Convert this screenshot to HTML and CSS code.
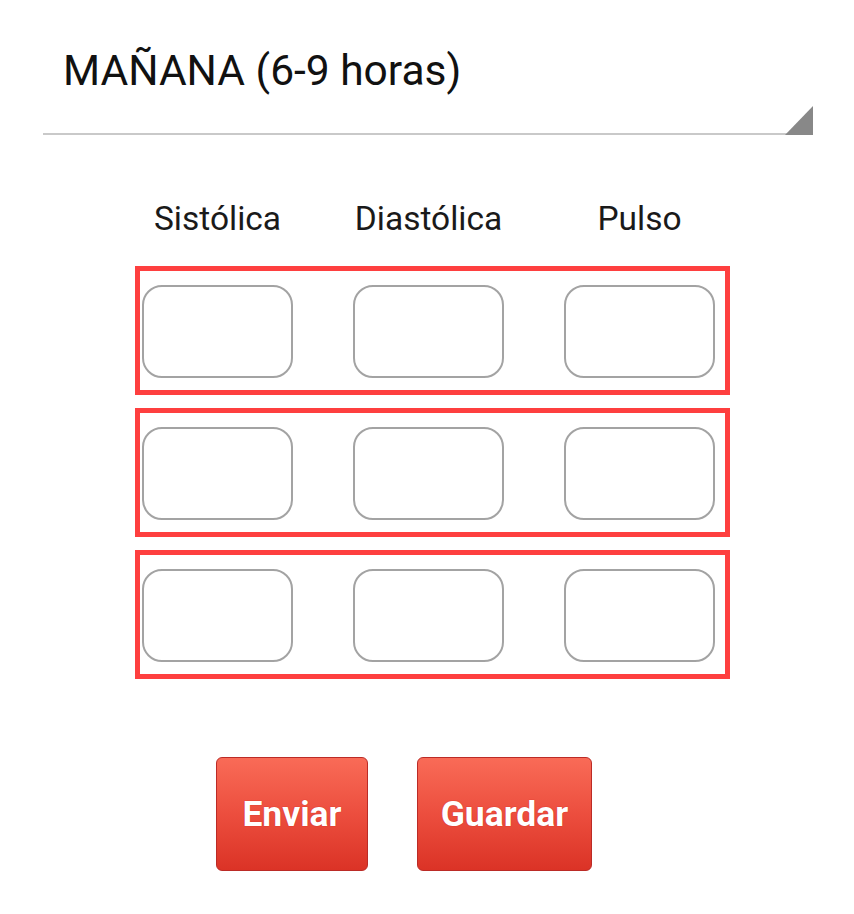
FILE: index.html
```html
<!DOCTYPE html>
<html lang="es">
<head>
<meta charset="utf-8">
<title>Presión</title>
<link rel="stylesheet" href="styles.css">
</head>
<body>
<div class="page">
  <div class="spinner">
    <span class="spinner-text">MAÑANA (6-9 horas)</span>
    <span class="spinner-arrow"></span>
  </div>
  <div class="table">
    <div class="labels">
      <div class="label">Sistólica</div>
      <div class="label">Diastólica</div>
      <div class="label">Pulso</div>
    </div>
    <div class="row">
      <input class="field" type="text">
      <input class="field" type="text">
      <input class="field" type="text">
    </div>
    <div class="row">
      <input class="field" type="text">
      <input class="field" type="text">
      <input class="field" type="text">
    </div>
    <div class="row">
      <input class="field" type="text">
      <input class="field" type="text">
      <input class="field" type="text">
    </div>
  </div>
  <div class="actions">
    <button class="btn btn-send">Enviar</button>
    <button class="btn btn-save">Guardar</button>
  </div>
</div>
</body>
</html>
```
FILE: styles.css
```css
html, body {
  margin: 0;
  padding: 0;
  background: #ffffff;
}
body {
  font-family: Roboto, "Liberation Sans", sans-serif;
  color: #111111;
}
.page {
  width: 854px;
  height: 914px;
}
.spinner {
  position: relative;
  margin: 0 41px 0 43px;
  padding: 46px 0 37px 20px;
  border-bottom: 2px solid #c9c9c9;
}
.spinner-text {
  display: block;
  font-size: 42.5px;
  line-height: 50px;
  color: #111;
}
.spinner-arrow {
  position: absolute;
  right: 0;
  bottom: -2px;
  width: 28px;
  height: 29px;
  background: #888888;
  clip-path: polygon(100% 0, 100% 100%, 0 100%);
}
.table {
  margin: 62px 0 0 135px;
  width: 595px;
}
.labels {
  display: flex;
  gap: 60px;
  padding-left: 7px;
  margin-bottom: 25px;
}
.label {
  width: 151px;
  text-align: center;
  font-size: 33.5px;
  line-height: 44px;
  color: #1a1a1a;
}
.row {
  display: flex;
  gap: 60px;
  box-sizing: border-box;
  height: 129px;
  border: 5px solid #fe3f3f;
  padding: 14px 0 0 2px;
  margin-bottom: 13px;
}
.field {
  box-sizing: border-box;
  width: 151px;
  height: 93px;
  margin: 0;
  border: 2px solid #a3a3a3;
  border-radius: 20px;
  background: #ffffff;
  outline: none;
}
.actions {
  display: flex;
  gap: 49px;
  padding-left: 216px;
  margin-top: 78px;
}
.btn {
  box-sizing: border-box;
  height: 114px;
  border: 1px solid #bb2b26;
  border-radius: 6px;
  background: linear-gradient(to bottom, #f96b57 0%, #ec4e3e 50%, #db3326 100%);
  color: #ffffff;
  font-family: Roboto, "Liberation Sans", sans-serif;
  font-weight: 700;
  font-size: 35.5px;
  text-shadow: 0 0 1px #c01010;
  padding: 0;
  cursor: pointer;
}
.btn-send {
  width: 152px;
}
.btn-save {
  width: 175px;
}
```
